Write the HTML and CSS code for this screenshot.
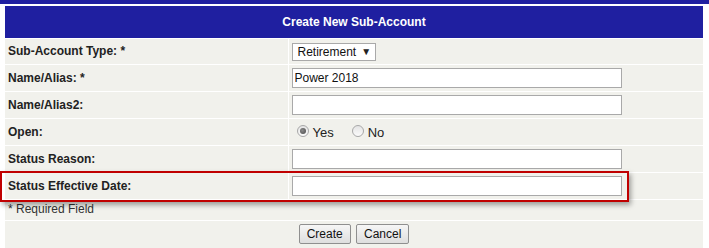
FILE: index.html
```html
<!DOCTYPE html>
<html lang="en">
<head>
    <meta charset="UTF-8">
    <title>Create New Sub-Account</title>
    <link rel="stylesheet" href="styles.css">
</head>
<body>
<div class="top-bar"></div>
<div class="page">
    <table class="form-table">
        <tr>
            <th class="form-title" colspan="2">Create New Sub-Account</th>
        </tr>
        <tr class="first-row">
            <td class="label">Sub-Account Type: *</td>
            <td class="value">
                <span class="select-box">Retirement <span class="arrow">&#9660;</span></span>
            </td>
        </tr>
        <tr>
            <td class="label">Name/Alias: *</td>
            <td class="value"><input type="text" class="text-field" value="Power 2018"></td>
        </tr>
        <tr>
            <td class="label">Name/Alias2:</td>
            <td class="value"><input type="text" class="text-field"></td>
        </tr>
        <tr>
            <td class="label">Open:</td>
            <td class="value">
                <span class="radio-group">
                    <label class="radio"><span class="radio-dot checked"></span>Yes</label>
                    <label class="radio"><span class="radio-dot"></span>No</label>
                </span>
            </td>
        </tr>
        <tr>
            <td class="label">Status Reason:</td>
            <td class="value"><input type="text" class="text-field"></td>
        </tr>
        <tr>
            <td class="label highlight-cell">
                Status Effective Date:
                <div class="highlight"></div>
            </td>
            <td class="value"><input type="text" class="text-field"></td>
        </tr>
        <tr class="note-row">
            <td colspan="2">* Required Field</td>
        </tr>
        <tr class="button-row">
            <td colspan="2">
                <button type="button">Create</button>
                <button type="button">Cancel</button>
            </td>
        </tr>
    </table>
</div>
</body>
</html>
```

FILE: styles.css
```css
:root {
    --navy: #1f1fa0;
    --cell-bg: #f1f1ec;
    --field-border: #a9a9a9;
    --mark-red: #c00000;
}

* {
    box-sizing: border-box;
}

body {
    margin: 0;
    background: #ffffff;
    font-family: Arial, 'Liberation Sans', sans-serif;
    font-size: 12px;
    color: #222222;
}

.top-bar {
    height: 4px;
    background-color: var(--navy);
}

.page {
    padding: 2px 6px 0 5px;
}

.form-table {
    width: 698px;
    border-collapse: collapse;
    border-spacing: 0;
}

.form-table td,
.form-table th {
    padding: 0;
    background-color: var(--cell-bg);
    border-bottom: 1px solid #ffffff;
    vertical-align: middle;
}

.form-table th.form-title {
    height: 32px;
    background-color: var(--navy);
    color: #ffffff;
    font-size: 12px;
    font-weight: bold;
    text-align: center;
}

.form-table tr td {
    height: 27px;
}

.form-table tr.first-row td {
    height: 26px;
}

.label {
    width: 283px;
    padding-left: 3px !important;
    font-weight: bold;
    border-right: 1px solid #ffffff;
}

.value {
    padding-left: 3px !important;
}

.text-field {
    display: block;
    width: 330px;
    height: 20px;
    margin: 0;
    padding: 0 2px;
    border: 1px solid var(--field-border);
    background: #ffffff;
    font-family: Arial, 'Liberation Sans', sans-serif;
    font-size: 12px;
    color: #111111;
    outline: none;
}

.select-box {
    display: inline-flex;
    align-items: center;
    width: 84px;
    height: 18px;
    padding: 0 4px 0 5px;
    margin-top: 1px;
    border: 1px solid var(--field-border);
    background: #ffffff;
    color: #111111;
    gap: 5px;
}

.select-box .arrow {
    font-size: 10px;
    color: #222222;
}

.radio-group {
    display: flex;
    gap: 18px;
    padding-left: 5px;
    padding-top: 2px;
}

.radio {
    display: inline-flex;
    align-items: center;
    gap: 4px;
    font-size: 13px;
    color: #222222;
}

.radio-dot {
    position: relative;
    display: inline-block;
    width: 12px;
    height: 12px;
    border-radius: 50%;
    border: 1px solid #a8a8a8;
    background: linear-gradient(#e4e4e4, #fbfbfb);
    margin-top: -3px;
}

.radio-dot.checked::after {
    content: '';
    position: absolute;
    left: 2px;
    top: 2px;
    width: 6px;
    height: 6px;
    border-radius: 50%;
    background: radial-gradient(circle at 40% 40%, #8a8a8a, #4a4a4a);
}

.highlight-cell {
    position: relative;
}

.highlight {
    position: absolute;
    left: -5px;
    top: -2px;
    width: 629px;
    height: 31px;
    border: 2px solid var(--mark-red);
    box-shadow: 2px 3px 5px rgba(0, 0, 0, 0.35);
    pointer-events: none;
}

.note-row td {
    height: 21px !important;
    padding-left: 3px;
    padding-bottom: 2px;
    color: #333333;
}

.button-row td {
    height: 32px !important;
    text-align: center;
    vertical-align: top;
    padding-top: 3px;
}

button {
    height: 20px;
    padding: 0 7px;
    margin: 0 1px;
    border: 1px solid #8f8f8f;
    border-radius: 2px;
    background: linear-gradient(#f6f6f6, #dedede);
    font-family: Arial, 'Liberation Sans', sans-serif;
    font-size: 12px;
    color: #111111;
}
```
